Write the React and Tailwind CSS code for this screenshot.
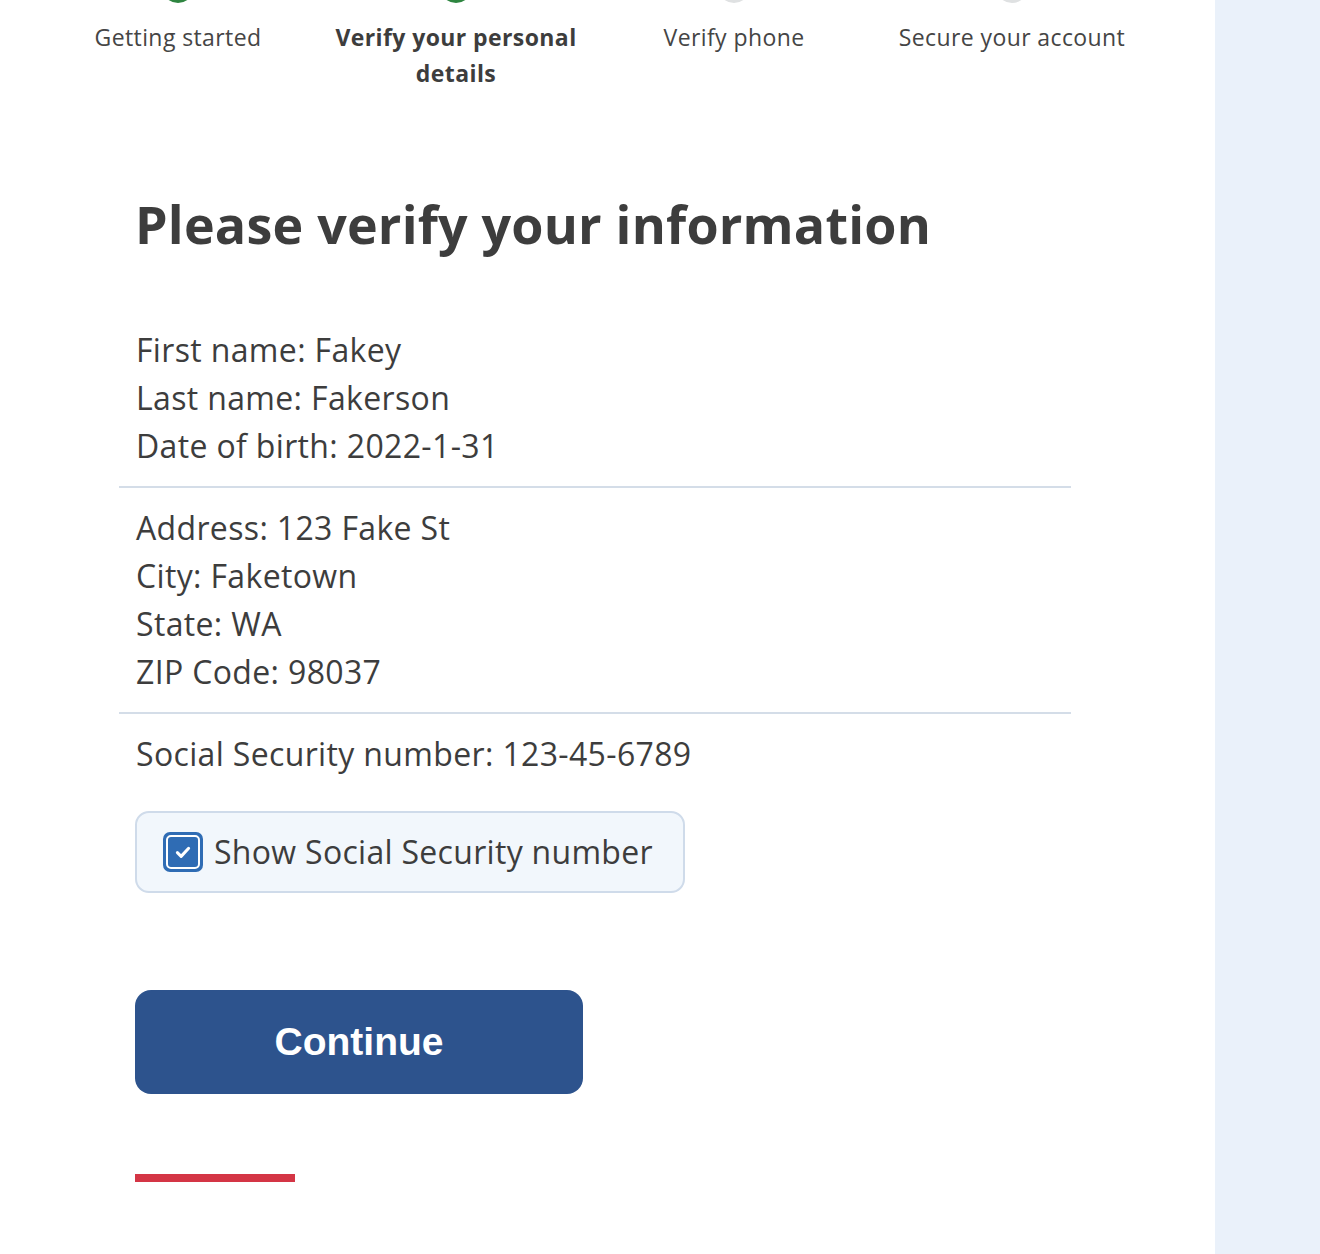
import React from "react";

const steps = [
  { label: "Getting started", done: true },
  { label: "Verify your personal details", done: true, current: true },
  { label: "Verify phone", done: false },
  { label: "Secure your account", done: false },
];

const Step = ({ label, done, current }) => (
  <div className="flex w-[278px] flex-col items-center">
    <div
      className={
        "-mt-[29px] h-8 w-8 rounded-full " +
        (done ? "bg-[#2e8540]" : "bg-[#dfe1e2]")
      }
    />
    <div
      className={
        "mt-[16px] w-[262px] text-center text-[23px] leading-[36px] tracking-[0.4px] " +
        (current ? "font-bold text-[#3d3d3d]" : "text-[#454545]")
      }
    >
      {label}
    </div>
  </div>
);

const Line = ({ children }) => (
  <p className="text-[32px] leading-[48px] tracking-[0.35px]">{children}</p>
);

export default function App() {
  const [showSsn, setShowSsn] = React.useState(true);

  return (
    <div
      className="flex min-h-[1254px] w-[1320px] overflow-hidden text-[#3d3d3d]"
      style={{ fontFamily: "'Open Sans', Roboto, sans-serif" }}
    >
      <main className="w-[1215px] bg-white">
        <div className="flex pl-[39px]">
          {steps.map((s) => (
            <Step key={s.label} {...s} />
          ))}
        </div>

        <div className="ml-[119px] w-[952px]">
          <h1 className="mt-[102px] pl-[16px] text-[52px] font-bold leading-[62px] tracking-[0.2px] text-[#3d3d3d]">
            Please verify your information
          </h1>

          <div className="mt-[71px] pl-[17px]">
            <Line>First name: Fakey</Line>
            <Line>Last name: Fakerson</Line>
            <Line>Date of birth: 2022-1-31</Line>
          </div>
          <hr className="my-4 border-t-2 border-[#d4dde8]" />
          <div className="pl-[17px]">
            <Line>Address: 123 Fake St</Line>
            <Line>City: Faketown</Line>
            <Line>State: WA</Line>
            <Line>ZIP Code: 98037</Line>
          </div>
          <hr className="my-4 border-t-2 border-[#d4dde8]" />
          <div className="pl-[16px]">
            <p className="pl-px text-[32px] leading-[48px] tracking-[0.35px]">
              Social Security number: {showSsn ? "123-45-6789" : "•••-••-••••"}
            </p>

            <label className="mt-[33px] flex h-[82px] w-[550px] cursor-pointer items-center rounded-[14px] border-2 border-[#cfdbea] bg-[#f2f7fc] pl-[26px]">
              <input
                type="checkbox"
                className="sr-only"
                checked={showSsn}
                onChange={() => setShowSsn(!showSsn)}
              />
              <span className="flex h-10 w-10 items-center justify-center rounded-[7px] bg-[#2f6cb4] p-[3px]">
                <span className="flex h-full w-full items-center justify-center rounded-[5px] border-2 border-white">
                  {showSsn && (
                    <svg viewBox="0 0 16 16" className="h-[20px] w-[20px]" fill="none">
                      <path d="M3.5 8.5l3 3 6-6.5" stroke="white" strokeWidth="2.4" strokeLinecap="round" strokeLinejoin="round" />
                    </svg>
                  )}
                </span>
              </span>
              <span className="ml-[11px] text-[32px] leading-[48px] tracking-[0.3px]">
                Show Social Security number
              </span>
            </label>

            <button
              className="mt-[97px] flex h-[104px] w-[448px] items-center justify-center rounded-[16px] bg-[#2d538d] text-[39px] font-bold text-white"
              style={{ fontFamily: "'Liberation Sans', Arial, sans-serif" }}
            >
              Continue
            </button>

            <div className="mt-[80px] h-2 w-40 bg-[#d43545]" />
          </div>
        </div>
      </main>
      <aside className="flex-1 bg-[#eaf1fa]" />
    </div>
  );
}
